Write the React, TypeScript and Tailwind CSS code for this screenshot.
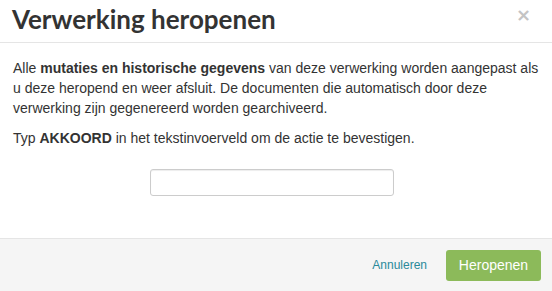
export default function App() {
  return (
    <div className="w-[552px] h-[291px] bg-white flex flex-col overflow-hidden">
      <div className="h-[43px] border-b border-[#e5e5e5] flex items-start justify-between pl-[12px] pr-[21px]">
        <h4 className="text-[26px] leading-[34px] mt-[2px] font-bold text-[#333] font-['Lato',sans-serif]">Verwerking heropenen</h4>
        <span className="text-[#c4c4c4] text-[18px] leading-none mt-[6px] font-bold font-['DejaVu_Sans',sans-serif]">×</span>
      </div>
      <div className="flex-1 px-[13px] pt-[15px] text-[14px] leading-[20px] text-[#333] font-['Liberation_Sans',Arial,sans-serif]">
        <p>
          Alle <b>mutaties en historische gegevens</b> van deze verwerking worden aangepast als u deze heropend en weer afsluit. De documenten die automatisch door deze verwerking zijn gegenereerd worden gearchiveerd.
        </p>
        <p className="mt-[10px]">
          Typ <b>AKKOORD</b> in het tekstinvoerveld om de actie te bevestigen.
        </p>
        <div className="flex justify-center mt-[21px] mr-[9px]">
          <input type="text" className="w-[244px] h-[27px] border border-[#ccc] rounded-[3px] shadow-[inset_0_1px_1px_rgba(0,0,0,0.075)] outline-none" />
        </div>
      </div>
      <div className="h-[53px] bg-[#f5f5f5] border-t border-[#e5e5e5] flex items-center justify-end pr-[11px] gap-[19px] font-['Liberation_Sans',Arial,sans-serif]">
        <span className="text-[12px] text-[#2a8a9a]">Annuleren</span>
        <button className="w-[95px] h-[31px] rounded-[3px] bg-[#8cba5a] text-white text-[14px]">Heropenen</button>
      </div>
    </div>
  );
}
